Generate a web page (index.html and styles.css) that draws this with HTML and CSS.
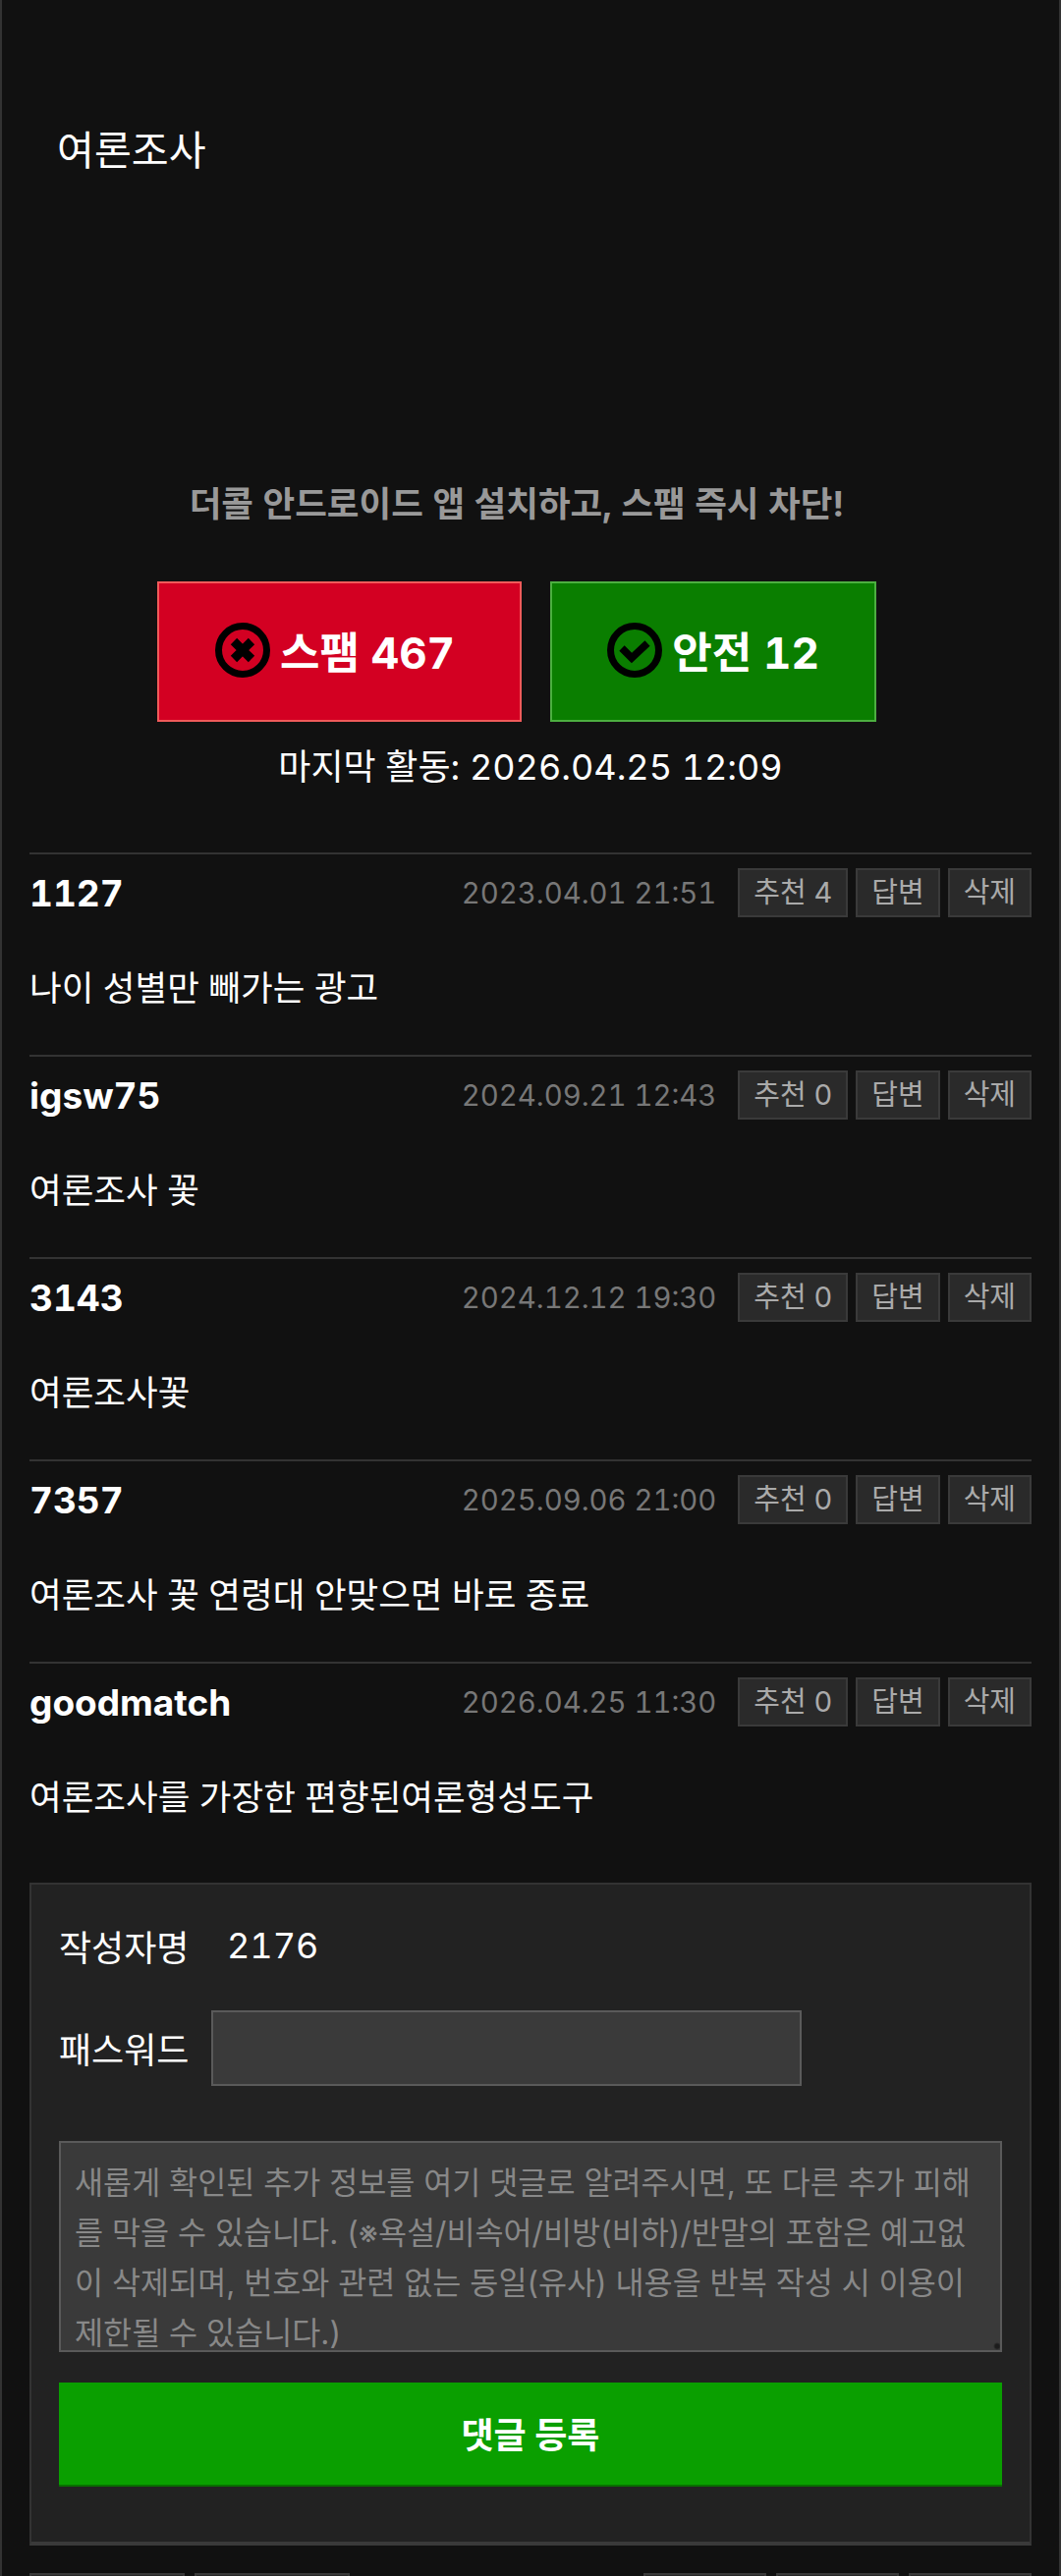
FILE: index.html
```html
<!DOCTYPE html>
<html lang="ko">
    <head>
        <meta charset="utf-8">
        <meta name="viewport" content="width=device-width, initial-scale=1.0">
        <title>여론조사</title>
        <link rel="stylesheet" href="styles.css">
    </head>
    <body>
        <div id="container">
            <h1 id="title">여론조사</h1>
            <p id="banner">더콜 안드로이드 앱 설치하고, 스팸 즉시 차단!</p>
            <div id="votes">
                <button class="vote spam">
                    <svg viewBox="0 0 56 56" width="56" height="56"><circle cx="28" cy="28" r="24.5" fill="none" stroke="#000" stroke-width="7"/><path d="M19 19L37 37M37 19L19 37" stroke="#000" stroke-width="9"/></svg>
                    스팸 467
                </button>
                <button class="vote safe">
                    <svg viewBox="0 0 56 56" width="56" height="56"><circle cx="28" cy="28" r="24.5" fill="none" stroke="#000" stroke-width="7"/><path d="M15 26L25 36L41 21" fill="none" stroke="#000" stroke-width="7.5"/></svg>
                    안전 12
                </button>
            </div>
            <p id="activity">마지막 활동: 2026.04.25 12:09</p>

            <div id="comments">
                <div class="comment">
                    <div class="head">
                        <b class="name">1127</b>
                        <span class="date">2023.04.01 21:51</span>
                        <a class="btn">추천 4</a><a class="btn">답변</a><a class="btn">삭제</a>
                    </div>
                    <p class="body">나이 성별만 빼가는 광고</p>
                </div>
                <div class="comment">
                    <div class="head">
                        <b class="name">igsw75</b>
                        <span class="date">2024.09.21 12:43</span>
                        <a class="btn">추천 0</a><a class="btn">답변</a><a class="btn">삭제</a>
                    </div>
                    <p class="body">여론조사 꽃</p>
                </div>
                <div class="comment">
                    <div class="head">
                        <b class="name">3143</b>
                        <span class="date">2024.12.12 19:30</span>
                        <a class="btn">추천 0</a><a class="btn">답변</a><a class="btn">삭제</a>
                    </div>
                    <p class="body">여론조사꽃</p>
                </div>
                <div class="comment">
                    <div class="head">
                        <b class="name">7357</b>
                        <span class="date">2025.09.06 21:00</span>
                        <a class="btn">추천 0</a><a class="btn">답변</a><a class="btn">삭제</a>
                    </div>
                    <p class="body">여론조사 꽃 연령대 안맞으면 바로 종료</p>
                </div>
                <div class="comment">
                    <div class="head">
                        <b class="name">goodmatch</b>
                        <span class="date">2026.04.25 11:30</span>
                        <a class="btn">추천 0</a><a class="btn">답변</a><a class="btn">삭제</a>
                    </div>
                    <p class="body">여론조사를 가장한 편향된여론형성도구</p>
                </div>
            </div>

            <form id="write">
                <div class="row author"><label>작성자명</label><span>2176</span></div>
                <div class="row password"><label>패스워드</label><input type="password"></div>
                <textarea placeholder="새롭게 확인된 추가 정보를 여기 댓글로 알려주시면, 또 다른 추가 피해를 막을 수 있습니다. (※욕설/비속어/비방(비하)/반말의 포함은 예고없이 삭제되며, 번호와 관련 없는 동일(유사) 내용을 반복 작성 시 이용이 제한될 수 있습니다.)"></textarea>
                <button type="button" id="submit">댓글 등록</button>
            </form>

            <div id="pager">
                <a class="page wide"></a><a class="page wide"></a>
                <span class="spacer"></span>
                <a class="page"></a><a class="page"></a><a class="page"></a>
            </div>
        </div>
    </body>
</html>
```
FILE: styles.css
```css
html, body {
    margin: 0;
    padding: 0;
    background: #111;
}

body {
    font-family: Inter, "Noto Sans CJK KR", sans-serif;
    font-variant-numeric: tabular-nums;
    color: #fff;
}

#container {
    box-sizing: border-box;
    width: 1080px;
    height: 2623px;
    overflow: hidden;
    padding: 0 28px;
    border-left: 2px solid #333;
    border-right: 2px solid #333;
}

#title {
    margin: 0;
    padding: 126px 0 0 28px;
    height: 222px;
    font-size: 41.2px;
    line-height: 54px;
    font-weight: 400;
}

#banner {
    margin: 141px 0 0;
    padding-right: 28px;
    height: 103px;
    text-align: center;
    font-size: 35.5px;
    line-height: 50px;
    font-weight: 700;
    color: #999;
}

#votes {
    display: flex;
    justify-content: center;
    gap: 29px;
    padding-right: 28px;
}

.vote {
    display: flex;
    align-items: center;
    justify-content: center;
    gap: 10px;
    height: 143px;
    box-sizing: border-box;
    padding: 0 0 3px;
    font-family: inherit;
    font-size: 44px;
    font-weight: 700;
    font-variant-numeric: inherit;
    color: #fff;
    border: 2px solid;
}

.vote.spam {
    width: 371px;
    padding-right: 9px;
    background: #d30022;
    border-color: #f05a5a;
}

.vote.safe {
    width: 332px;
    background: #0a7e00;
    border-color: #4caf40;
}

#activity {
    margin: 21px 0 62px;
    text-align: center;
    font-size: 36px;
    line-height: 50px;
}

.comment {
    height: 206px;
    box-sizing: border-box;
    border-top: 2px solid #333;
    padding-top: 14px;
}

.head {
    display: flex;
    align-items: center;
    height: 50px;
}

.name {
    flex: 1;
    font-size: 37px;
    font-weight: 700;
}

.date {
    font-size: 29.3px;
    color: #777;
    margin-right: 22px;
}

.btn {
    display: inline-block;
    box-sizing: border-box;
    height: 50px;
    line-height: 46px;
    padding: 0 14px;
    margin-left: 8px;
    font-size: 29px;
    color: #aaa;
    background: #2a2a2a;
    border: 2px solid #3a3a3a;
}

.date + .btn {
    margin-left: 0;
}

.body {
    margin: 48px 0 0;
    font-size: 35.5px;
    line-height: 50px;
}

#write {
    box-sizing: border-box;
    height: 675px;
    margin-top: 19px;
    padding: 38px 28px 0;
    background: #222;
    border: 2px solid #333;
    border-bottom: 4px solid #3a3a3a;
}

.row {
    display: flex;
    align-items: center;
    font-size: 36px;
}

.row label, .row span {
    margin-bottom: 2px;
}

.author {
    height: 50px;
}

.author label {
    width: 171px;
}

.password {
    margin-top: 40px;
    height: 77px;
}

.password label {
    width: 155px;
}

.password input {
    box-sizing: border-box;
    width: 601px;
    height: 77px;
    background: #3a3a3a;
    border: 2px solid #5a5a5a;
    outline: none;
}

textarea {
    display: block;
    box-sizing: border-box;
    width: 100%;
    height: 215px;
    margin-top: 56px;
    padding: 15px 14px;
    font-family: inherit;
    font-size: 31.6px;
    line-height: 51px;
    color: #fff;
    background: radial-gradient(circle at calc(100% - 3px) calc(100% - 4px), #1c1c1c 2px, transparent 4px), #3a3a3a;
    border: 2px solid #5a5a5a;
    outline: none;
    resize: none;
    overflow: hidden;
}

textarea::placeholder {
    color: #888;
}

#submit {
    display: block;
    width: 100%;
    height: 106px;
    margin-top: 31px;
    padding-bottom: 3px;
    font-family: inherit;
    font-size: 36px;
    font-weight: 700;
    color: #fff;
    background: #0a9f00;
    border: 0;
    border-bottom: 2px solid #086f00;
}

#pager {
    display: flex;
    gap: 10px;
    margin-top: 28px;
}

.page {
    box-sizing: border-box;
    width: 125px;
    height: 50px;
    background: #2a2a2a;
    border: 2px solid #3a3a3a;
}

.page.wide {
    width: 158px;
}

.spacer {
    flex: 1;
}
```
